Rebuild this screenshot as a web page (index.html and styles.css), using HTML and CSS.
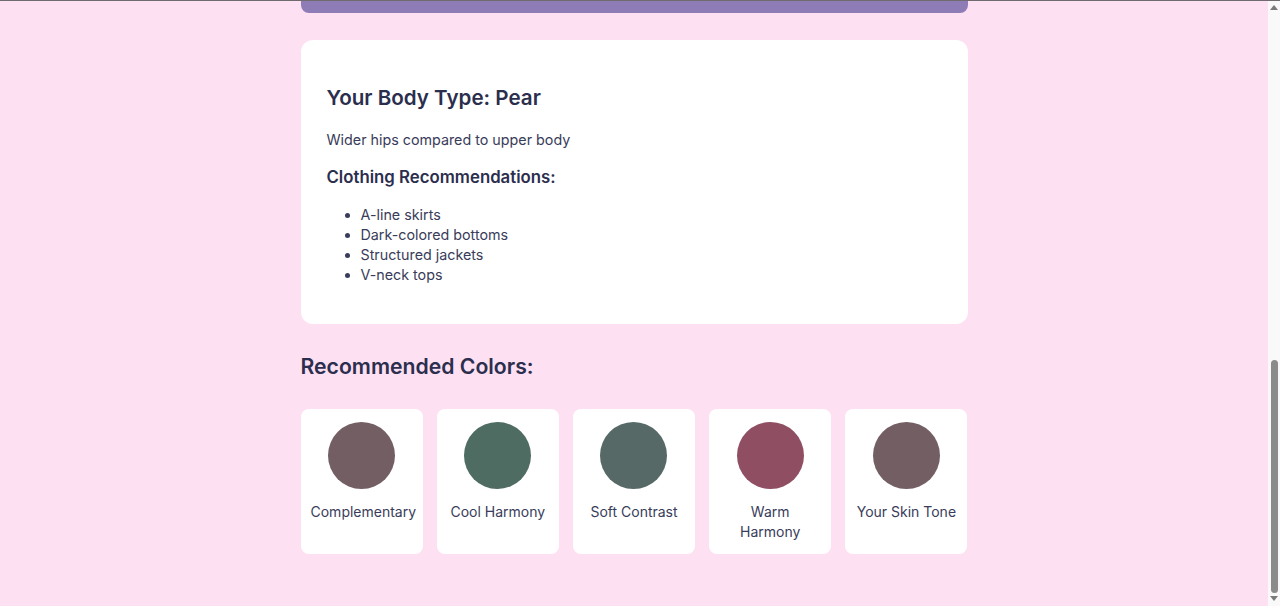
FILE: index.html
```html
<!DOCTYPE html>
<html lang="en">
<head>
<meta charset="utf-8">
<title>Style Analyzer</title>
<link rel="stylesheet" href="styles.css">
</head>
<body>
<div class="viewport">
  <main class="page">
    <div class="analyze-strip"></div>

    <section class="result-card">
      <h2 class="result-title">Your Body Type: Pear</h2>
      <p class="result-desc">Wider hips compared to upper body</p>
      <h3 class="result-sub">Clothing Recommendations:</h3>
      <ul class="rec-list">
        <li>A-line skirts</li>
        <li>Dark-colored bottoms</li>
        <li>Structured jackets</li>
        <li>V-neck tops</li>
      </ul>
    </section>

    <h2 class="colors-title">Recommended Colors:</h2>
    <div class="swatches">
      <div class="swatch">
        <div class="dot" style="background:#735e63"></div>
        <span class="swatch-label">Complementary</span>
      </div>
      <div class="swatch">
        <div class="dot" style="background:#4e6c61"></div>
        <span class="swatch-label">Cool Harmony</span>
      </div>
      <div class="swatch">
        <div class="dot" style="background:#566966"></div>
        <span class="swatch-label">Soft Contrast</span>
      </div>
      <div class="swatch">
        <div class="dot" style="background:#8f4e62"></div>
        <span class="swatch-label">Warm Harmony</span>
      </div>
      <div class="swatch">
        <div class="dot" style="background:#735e63"></div>
        <span class="swatch-label">Your Skin Tone</span>
      </div>
    </div>
  </main>
</div>
<div class="scrollbar" aria-hidden="true">
  <span class="arrow arrow-up"></span>
  <div class="track"><span class="thumb"></span></div>
  <span class="arrow arrow-down"></span>
</div>
</body>
</html>
```

FILE: styles.css
```css
* { box-sizing: border-box; }

html { background: #fde1f3; }

body {
  margin: 0;
  height: 606px;
  overflow: hidden;
  display: flex;
  border-top: 1px solid #6e6a6e;
  font-family: "Inter", "Noto Sans", sans-serif;
  color: #393c5a;
  background: #fde1f3;
}

.viewport {
  flex: 1;
  min-width: 0;
}

.page {
  max-width: 667px;
  margin: 0 auto;
  padding: 0 0 52px;
}

.analyze-strip {
  height: 12px;
  background: #8d7cb5;
  border-radius: 0 0 8px 8px;
}

.result-card {
  margin-top: 27px;
  background: #fff;
  border-radius: 12px;
  padding: 26px 26px 24px;
}
.result-title {
  margin: 20px 0 0;
  font-size: 20.6px;
  line-height: 24px;
  font-weight: 600;
  color: #2b2e4d;
}
.result-desc {
  margin: 20px 0 0;
  font-size: 14.3px;
  line-height: 20px;
}
.result-sub {
  margin: 16px 0 0;
  font-size: 16.8px;
  line-height: 22px;
  font-weight: 600;
  color: #2b2e4d;
}
.rec-list {
  margin: 17px 0 15px;
  padding-left: 34px;
  font-size: 14.3px;
  line-height: 20px;
}

.colors-title {
  margin: 29px 0 0;
  font-size: 21.2px;
  line-height: 26px;
  font-weight: 600;
  color: #2b2e4d;
}

.swatches {
  margin-top: 30px;
  display: grid;
  grid-template-columns: repeat(5, minmax(0, 1fr));
  gap: 14px;
}
.swatch {
  background: #fff;
  border-radius: 8px;
  padding: 13px 10px 12px;
  display: flex;
  flex-direction: column;
  text-align: center;
}
.dot {
  width: 67px;
  height: 67px;
  border-radius: 50%;
  margin: 0 auto 13px;
  flex: none;
}
.swatch-label {
  display: block;
  font-size: 14px;
  line-height: 20px;
  color: #393c5a;
}

/* window scrollbar as seen in the screenshot */
.scrollbar {
  width: 12px;
  flex: none;
  background: #f9f9f9;
  display: flex;
  flex-direction: column;
  align-items: center;
  padding: 4px 0 5px;
}
.arrow {
  width: 0;
  height: 0;
  border-left: 4px solid transparent;
  border-right: 4px solid transparent;
  flex: none;
}
.arrow-up { border-bottom: 5px solid #7a7a7a; }
.arrow-down { border-top: 5px solid #7a7a7a; }
.track {
  flex: 1;
  width: 100%;
  display: flex;
  flex-direction: column;
  justify-content: flex-end;
  align-items: center;
  padding: 0 0 3px;
}
.thumb {
  width: 7px;
  height: 233px;
  border-radius: 4px;
  background: #8b8b8b;
}
```
